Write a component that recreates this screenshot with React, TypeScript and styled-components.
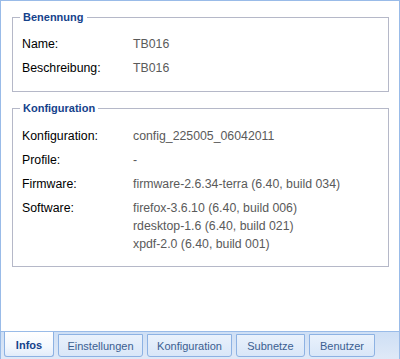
import React from "react";
import styled, { createGlobalStyle } from "styled-components";

const GlobalStyles = createGlobalStyle`
  html, body {
    margin: 0;
    padding: 0;
    background: #ffffff;
  }
  body {
    font-family: "Liberation Sans", Arial, sans-serif;
  }
`;

const Panel = styled.div`
  width: 400px;
  height: 359px;
  display: flex;
  flex-direction: column;
  box-sizing: border-box;
`;

const Body = styled.div`
  flex: 1;
  border: 1px solid #99bbe8;
  padding: 9px 10px 0 11px;
  background: #ffffff;
`;

const FieldSet = styled.fieldset<{ $top: number; $bottom: number }>`
  margin: 0 0 9px 0;
  border: 1px solid #b5b8c8;
  padding: ${(p) => p.$top}px 7px ${(p) => p.$bottom}px 7px;
`;

const Legend = styled.legend`
  padding: 0 3px;
  font-size: 11px;
  line-height: 14px;
  font-weight: bold;
  color: #15428b;
`;

const Grid = styled.div`
  display: grid;
  grid-template-columns: 111px auto;
  row-gap: 9px;
  padding-left: 2px;
  font-size: 12.3px;
  line-height: 15px;
`;

const Label = styled.div`
  color: #000000;
`;

const Value = styled.div`
  color: #5a5a5a;
`;

const ValueLines = styled.div`
  color: #5a5a5a;
  line-height: 18px;
  margin-top: -2px;
`;

const TabStrip = styled.div`
  height: 27px;
  display: flex;
  align-items: flex-start;
  gap: 4px;
  padding-left: 3px;
  border-left: 1px solid #99bbe8;
  border-right: 1px solid #99bbe8;
  background: linear-gradient(#cedff5, #dfe9f7);
`;

const Tab = styled.div<{ $active?: boolean; $w: number }>`
  box-sizing: border-box;
  width: ${(p) => p.$w}px;
  height: ${(p) => (p.$active ? 25 : 23)}px;
  margin-top: ${(p) => (p.$active ? 0 : 2)}px;
  border: 1px solid #8db2e3;
  border-top: ${(p) => (p.$active ? "none" : "1px solid #8db2e3")};
  border-radius: 0 0 3px 3px;
  background: ${(p) =>
    p.$active
      ? "linear-gradient(#ffffff, #f3f8fe 60%, #e2ecfa)"
      : "linear-gradient(#e9f1fc, #d9e7f8)"};
  color: ${(p) => (p.$active ? "#15428b" : "#3b5e91")};
  font-weight: ${(p) => (p.$active ? "bold" : "normal")};
  font-size: 11px;
  display: flex;
  align-items: center;
  justify-content: center;
  padding-top: ${(p) => (p.$active ? 2 : 0)}px;
`;

const tabs = [
  { name: "Infos", w: 50, active: true },
  { name: "Einstellungen", w: 85 },
  { name: "Konfiguration", w: 85 },
  { name: "Subnetze", w: 69 },
  { name: "Benutzer", w: 66 },
];

export default function App() {
  return (
    <>
      <GlobalStyles />
      <Panel>
        <Body>
          <FieldSet $top={13} $bottom={15}>
            <Legend>Benennung</Legend>
            <Grid>
              <Label>Name:</Label>
              <Value>TB016</Value>
              <Label>Beschreibung:</Label>
              <Value>TB016</Value>
            </Grid>
          </FieldSet>
          <FieldSet $top={14} $bottom={13}>
            <Legend>Konfiguration</Legend>
            <Grid>
              <Label>Konfiguration:</Label>
              <Value>config_225005_06042011</Value>
              <Label>Profile:</Label>
              <Value>-</Value>
              <Label>Firmware:</Label>
              <Value>firmware-2.6.34-terra (6.40, build 034)</Value>
              <Label>Software:</Label>
              <ValueLines>
                firefox-3.6.10 (6.40, build 006)
                <br />
                rdesktop-1.6 (6.40, build 021)
                <br />
                xpdf-2.0 (6.40, build 001)
              </ValueLines>
            </Grid>
          </FieldSet>
        </Body>
        <TabStrip>
          {tabs.map((t) => (
            <Tab key={t.name} $active={t.active} $w={t.w}>
              {t.name}
            </Tab>
          ))}
        </TabStrip>
      </Panel>
    </>
  );
}
